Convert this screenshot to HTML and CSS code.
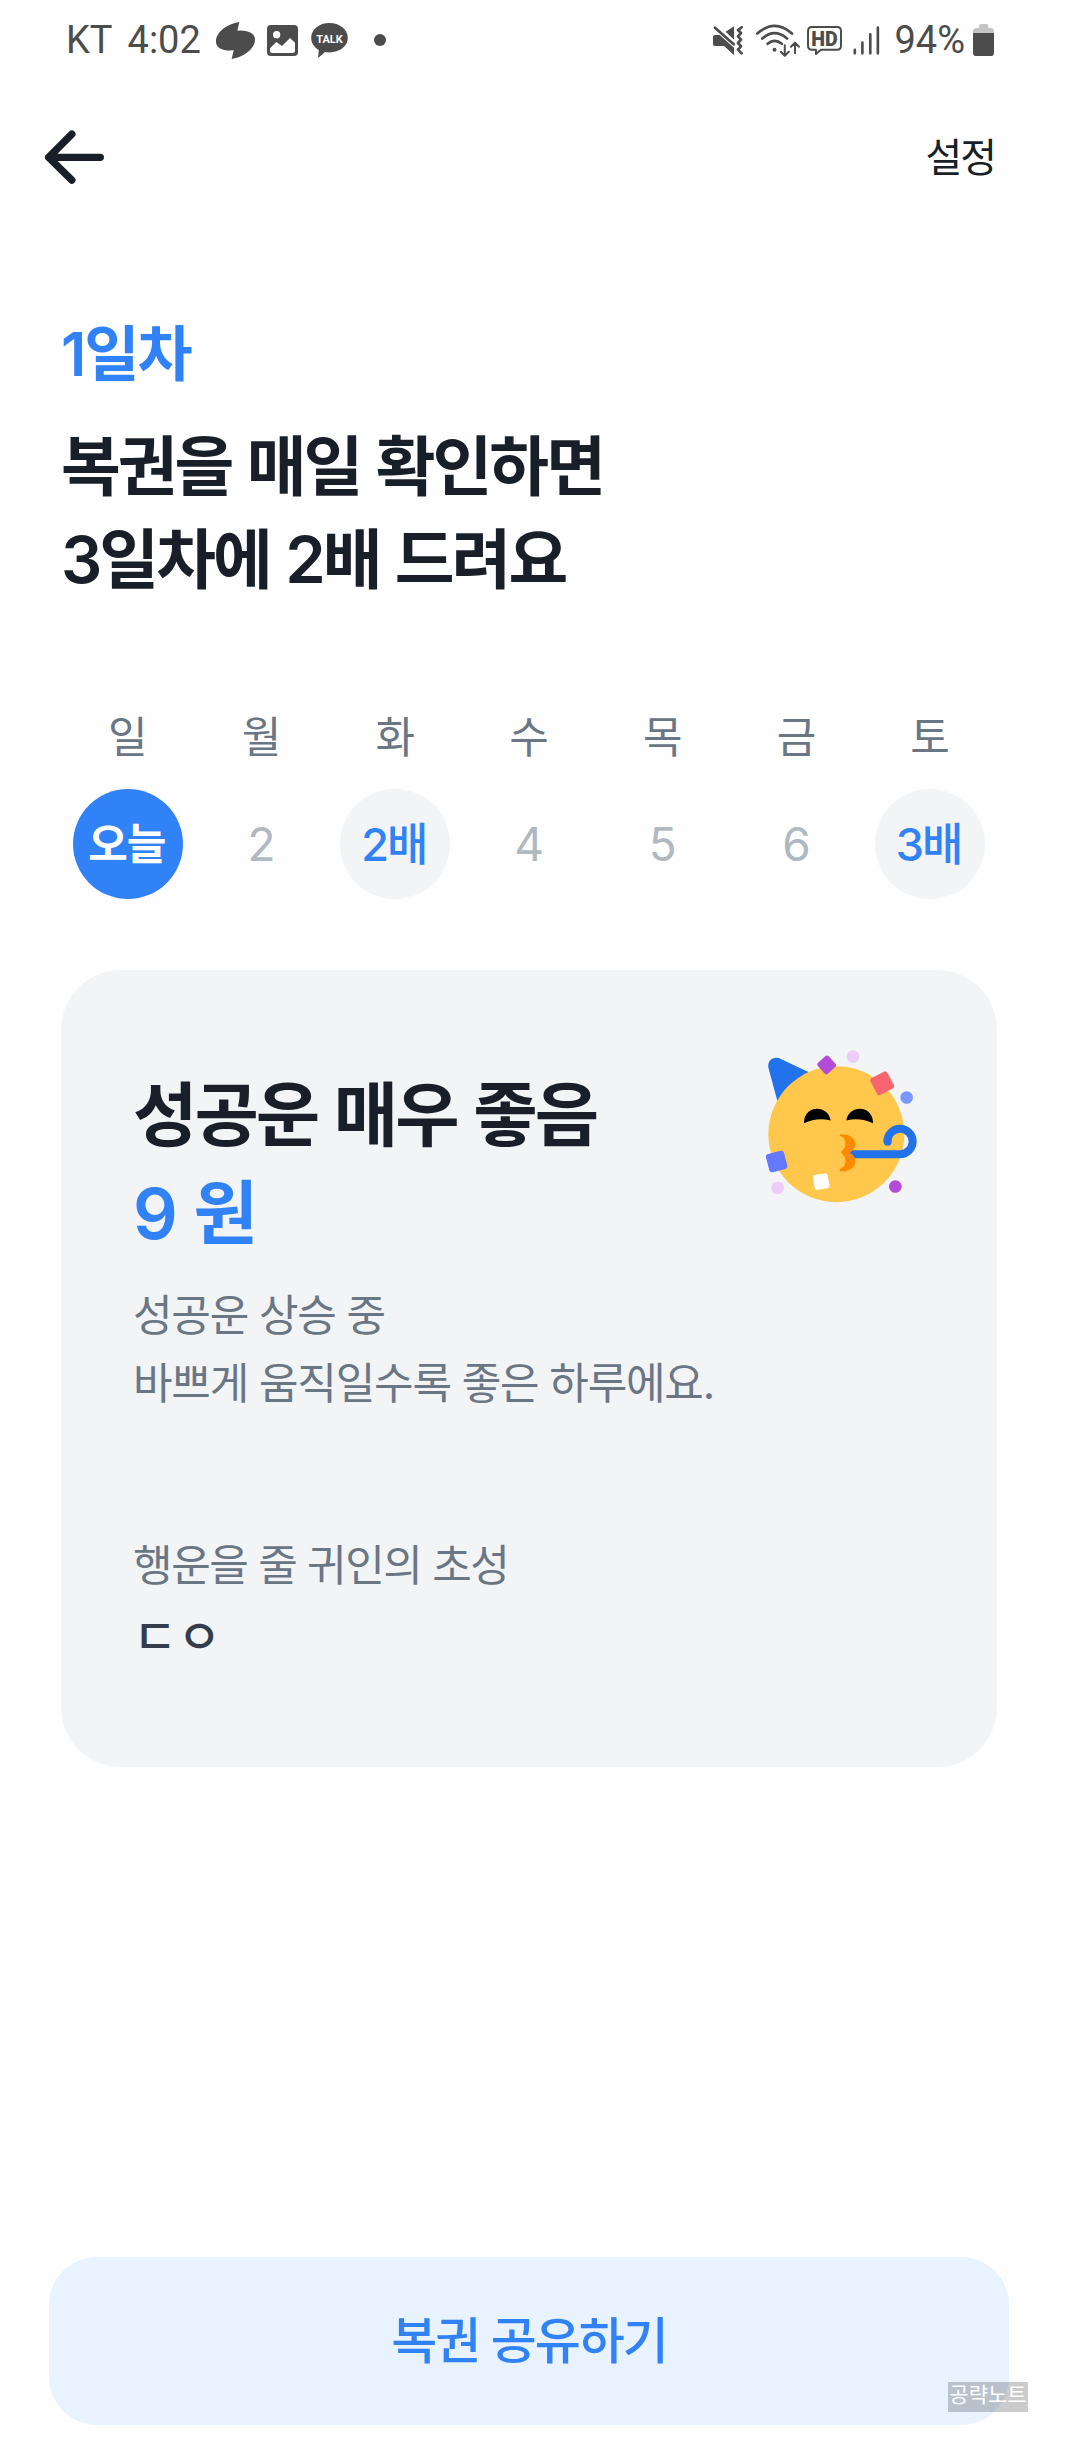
FILE: index.html
```
<!DOCTYPE html>
<html lang="ko">
  <head>
    <meta charset="UTF-8" />
    <meta name="viewport" content="width=device-width, initial-scale=1.0" />
    <title>복권</title>
    <link rel="stylesheet" href="styles.css" />
  </head>
  <body>
    <!-- Status bar -->
    <div class="status">
      <div class="status__group">
        <span class="status__carrier">KT</span>
        <span class="status__time">4:02</span>
        <svg class="status__blob" viewBox="528 66 117 111">
          <path d="M598 66L592 92C624 89 645 100 645 118C645 148 611 171 575 177L581 151C549 154 528 143 528 125C528 95 562 72 598 66Z" />
        </svg>
        <svg class="status__photo" viewBox="681 75 93 93">
          <path fill-rule="evenodd" d="M693 75H762Q774 75 774 87V156Q774 168 762 168H693Q681 168 681 156V87Q681 75 693 75ZM690 145V153Q690 159 696 159H758Q765 159 765 153V128L750 114L726 138L709 126ZM710 93A11 11 0 1 0 710 115A11 11 0 1 0 710 93Z" />
        </svg>
        <svg class="status__talk" viewBox="813 69 111 106">
          <path d="M868 69C899 69 924 88 924 114C924 140 899 158 868 158Q861 158 855 157L834 175L836 151C822 143 813 130 813 114C813 88 838 69 868 69Z" />
          <text x="868.5" y="129" text-anchor="middle" textLength="80" lengthAdjust="spacingAndGlyphs">TALK</text>
        </svg>
        <span class="status__dot"></span>
      </div>
      <div class="status__group">
        <svg class="status__mute" viewBox="66 76 90 87">
          <path d="M66 108Q66 103 72 103H86L129 141V163L99 136H72Q66 136 66 130ZM104 93L129 77V117Z" />
          <path class="line" d="M72 81L128 131" />
          <path class="line" d="M152 80L141 88L150 97L141 107L150 117L141 127L150 137L141 147L152 158" />
        </svg>
        <svg class="status__wifi" viewBox="197 68 131 100">
          <path class="line" d="M200 97Q252 50 305 97M215 112Q252 80 290 112M231 128Q252 110 274 128" />
          <circle cx="252" cy="146" r="6" />
          <path class="line line--thin" d="M283 132V163M271 152L283 164L295 152M314 157V126M302 137L314 125L326 137" />
        </svg>
        <svg class="status__hd" viewBox="349 77 106 88">
          <path class="line line--thin" d="M364 80H440Q452 80 452 92V137Q452 149 440 149H391L376 162V149H364Q352 149 352 137V92Q352 80 364 80Z" />
          <text x="402" y="137" text-anchor="middle" textLength="80" lengthAdjust="spacingAndGlyphs">HD</text>
        </svg>
        <svg class="status__signal" viewBox="489 74 81 88">
          <path class="line" d="M494 146V157M517 124V157M541 99V157M564 79V157" />
        </svg>
        <span class="status__percent">94%</span>
        <svg class="status__battery" viewBox="849 69 63 96">
          <path class="tip" d="M867 75Q867 69 873 69H889Q895 69 895 75V81H902Q912 81 912 92V97H849V92Q849 81 859 81H867Z" />
          <path d="M849 96H912V155Q912 165 902 165H859Q849 165 849 155Z" />
        </svg>
      </div>
    </div>

    <header class="header">
      <a href="#" class="header__back" aria-label="뒤로">
        <svg viewBox="16 390 176 160">
          <path d="M181 471H27M96 402L27 471L96 539" />
        </svg>
      </a>
      <a href="#" class="header__settings">설정</a>
    </header>

    <main class="main">
      <p class="day-count">1일차</p>
      <h1 class="title">복권을 매일 확인하면<br />3일차에 2배 드려요</h1>

      <ul class="week">
        <li class="week__item">
          <span class="week__name">일</span>
          <span class="week__day week__day--today">오늘</span>
        </li>
        <li class="week__item">
          <span class="week__name">월</span>
          <span class="week__day">2</span>
        </li>
        <li class="week__item">
          <span class="week__name">화</span>
          <span class="week__day week__day--bonus">2배</span>
        </li>
        <li class="week__item">
          <span class="week__name">수</span>
          <span class="week__day">4</span>
        </li>
        <li class="week__item">
          <span class="week__name">목</span>
          <span class="week__day">5</span>
        </li>
        <li class="week__item">
          <span class="week__name">금</span>
          <span class="week__day">6</span>
        </li>
        <li class="week__item">
          <span class="week__name">토</span>
          <span class="week__day week__day--bonus">3배</span>
        </li>
      </ul>

      <section class="card">
        <div class="card__top">
          <div>
            <h2 class="card__title">성공운 매우 좋음</h2>
            <p class="card__prize">9 원</p>
          </div>
          <svg class="card__emoji" viewBox="75 60 456 458">
            <path fill="#2272eb" d="M85 112C82 88 103 76 124 87L210 128L112 212Z" />
            <circle cx="289" cy="312" r="204" fill="#ffc84d" />
            <path d="M192 275C194 225 264 222 272 271Q232 260 192 279ZM399 275C397 225 327 222 319 271Q359 260 399 279Z" />
            <path fill="none" stroke="#2272eb" stroke-width="24" d="M325 372H480A38 38 0 1 0 442 335" />
            <circle cx="443" cy="335" r="12" fill="#2272eb" />
            <path fill="#ff8a00" d="M300 312C332 311 347 326 346 344Q345 357 330 368Q346 379 346 393C346 412 328 425 300 423C297 420 299 417 303 415C321 407 321 382 305 369C302 366 303 364 307 361C322 348 319 324 303 318C299 316 298 314 300 312Z" />
            <rect x="238" y="82" width="44" height="44" rx="8" fill="#b44bd6" transform="rotate(48 260 104)" />
            <rect x="398" y="131" width="57" height="57" rx="8" fill="#f66570" transform="rotate(-28 426 159)" />
            <rect x="82" y="366" width="56" height="56" rx="9" fill="#6479ff" transform="rotate(-15 110 394)" />
            <rect x="221" y="432" width="45" height="45" rx="8" fill="#fff" transform="rotate(-10 243 454)" />
            <circle cx="339" cy="79" r="19" fill="#edccf8" />
            <circle cx="500" cy="202" r="19" fill="#7998ff" />
            <circle cx="113" cy="473" r="19" fill="#edccf8" />
            <circle cx="466" cy="469" r="19" fill="#b44bd6" />
          </svg>
        </div>
        <p class="card__text">성공운 상승 중<br />바쁘게 움직일수록 좋은 하루에요.</p>
        <p class="card__label">행운을 줄 귀인의 초성</p>
        <p class="card__initials">ㄷㅇ</p>
      </section>
    </main>

    <footer class="footer">
      <button class="share-btn">복권 공유하기</button>
      <span class="watermark">공략노트</span>
    </footer>
  </body>
</html>
```
FILE: styles.css
```
* {
  margin: 0;
  padding: 0;
  box-sizing: border-box;
}

body {
  display: flex;
  flex-direction: column;
  min-height: 2452px;
  color: #191f28;
  background-color: #fefefe;
  font-family: "Inter", "Noto Sans CJK KR", sans-serif;
}

a {
  color: inherit;
  text-decoration: none;
}

/* Status bar */
.status {
  display: flex;
  justify-content: space-between;
  height: 80px;
  padding: 0 74px 0 66px;
  color: #4c4c4c;
  font-family: "Roboto", sans-serif;
  font-size: 38px;
}
.status__group {
  display: flex;
  align-items: center;
}
.status svg {
  fill: #4c4c4c;
}
.status .line {
  fill: none;
  stroke: #4c4c4c;
  stroke-width: 8;
  stroke-linecap: round;
  stroke-linejoin: round;
}
.status .line--thin {
  stroke-width: 6;
}
.status .tip {
  fill: #c4c4c4;
}
.status__time {
  margin-left: 15px;
}
.status__blob {
  width: 39px;
  height: 37px;
  margin-left: 15px;
}
.status__photo {
  width: 31px;
  height: 31px;
  margin-left: 12px;
}
.status__talk {
  width: 37px;
  height: 35px;
  margin-left: 13px;
}
.status .status__talk text {
  fill: #fff;
  font-size: 35px;
  font-weight: 700;
}
.status__dot {
  width: 12px;
  height: 12px;
  margin-left: 26px;
  border-radius: 50%;
  background-color: #4c4c4c;
}
.status__mute {
  width: 30px;
  height: 29px;
}
.status__wifi {
  width: 44px;
  height: 33px;
  margin-left: 13px;
}
.status__hd {
  width: 35px;
  height: 29px;
  margin-left: 7px;
}
.status__hd text {
  font-size: 60px;
  font-weight: 900;
}
.status__signal {
  width: 27px;
  height: 29px;
  margin-left: 11px;
}
.status__percent {
  margin-left: 14px;
}
.status__battery {
  width: 21px;
  height: 32px;
  margin-left: 8px;
}

/* Header */
.header {
  display: flex;
  justify-content: space-between;
  align-items: center;
  height: 154px;
  padding: 0 73px 0 45px;
}
.header__back {
  width: 59px;
  height: 54px;
}
.header__back svg {
  display: block;
  width: 100%;
  height: 100%;
  fill: none;
  stroke: #191f28;
  stroke-width: 22;
  stroke-linecap: round;
  stroke-linejoin: round;
}
.header__settings {
  padding-bottom: 4px;
  font-size: 40px;
  letter-spacing: -2px;
}

/* Main */
.main {
  padding: 0 71px 0 61px;
}
.day-count {
  margin-top: 75px;
  color: #3182f6;
  font-size: 60px;
  font-weight: 600;
  line-height: 90px;
  letter-spacing: -2px;
}
.title {
  margin-top: 21px;
  font-size: 65px;
  font-weight: 600;
  line-height: 93px;
  letter-spacing: -3px;
  word-spacing: 2px;
}

.week {
  display: grid;
  grid-template-columns: repeat(7, 1fr);
  margin-top: 101px;
  list-style: none;
}
.week__item {
  display: flex;
  flex-direction: column;
  align-items: center;
}
.week__name {
  color: #6b7684;
  font-size: 43px;
  line-height: 60px;
}
.week__day {
  display: flex;
  justify-content: center;
  align-items: center;
  width: 110px;
  height: 110px;
  margin-top: 22px;
  border-radius: 50%;
  color: #b0b8c1;
  font-size: 46px;
}
.week__day--today {
  padding: 0 2px 6px 0;
  color: #fff;
  background-color: #3182f6;
  font-size: 43px;
  font-weight: 600;
  letter-spacing: -1px;
}
.week__day--bonus {
  padding: 0 3px 5px 0;
  color: #3182f6;
  background-color: #f2f4f6;
  font-size: 45px;
  font-weight: 500;
  letter-spacing: -2px;
}

/* Card */
.card {
  height: 797px;
  margin-top: 71px;
  padding: 80px 80px 0 72px;
  border-radius: 60px;
  background-color: #f2f4f6;
}
.card__top {
  display: flex;
  justify-content: space-between;
}
.card__title,
.card__prize {
  margin-top: 17px;
  font-size: 70px;
  font-weight: 600;
  line-height: 98px;
  letter-spacing: -3px;
  word-spacing: 2px;
}
.card__prize {
  margin-top: 0;
  color: #3182f6;
  word-spacing: 4px;
}
.card__emoji {
  width: 152px;
  height: 153px;
}
.card__text,
.card__label {
  margin-top: 18px;
  color: #6b7684;
  font-size: 43px;
  line-height: 68px;
  letter-spacing: -1.2px;
}
.card__label {
  margin-top: 114px;
  letter-spacing: -1.4px;
}
.card__initials {
  margin-top: 4px;
  color: #333d4b;
  font-size: 48px;
  font-weight: 500;
  line-height: 68px;
}

/* Footer */
.footer {
  position: relative;
  margin-top: auto;
  padding: 0 59px 27px 49px;
}
.share-btn {
  display: block;
  width: 100%;
  height: 168px;
  padding-bottom: 8px;
  border: none;
  border-radius: 48px;
  color: #3182f6;
  background-color: #e8f3ff;
  font: inherit;
  font-size: 50px;
  font-weight: 500;
  letter-spacing: -2px;
}
.watermark {
  position: absolute;
  right: 40px;
  bottom: 40px;
  width: 80px;
  height: 30px;
  color: #fff;
  background-color: rgba(0, 0, 0, 0.2);
  font-size: 21px;
  line-height: 26px;
  text-align: center;
}
```
